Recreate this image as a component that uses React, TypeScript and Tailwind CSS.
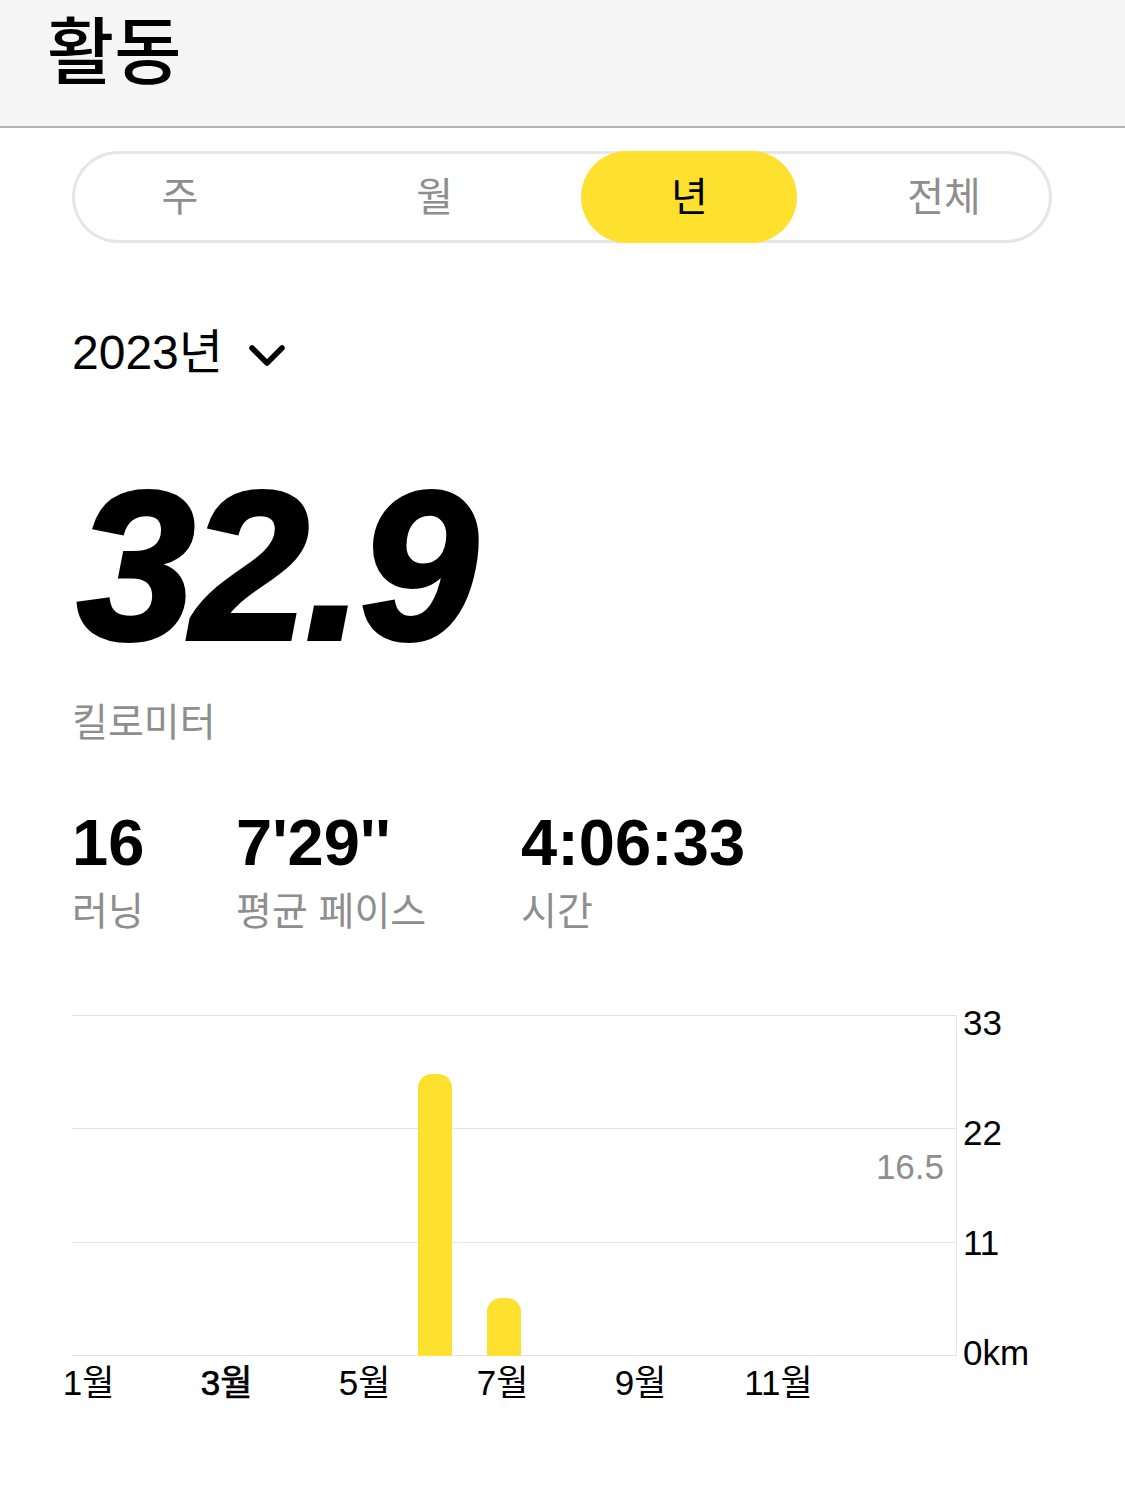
import React from 'react';

const tabs = ['주', '월', '년', '전체'];

const months = [
  { m: 1, km: 0 },
  { m: 2, km: 0 },
  { m: 3, km: 0 },
  { m: 4, km: 0 },
  { m: 5, km: 0 },
  { m: 6, km: 27.3 },
  { m: 7, km: 5.6 },
  { m: 8, km: 0 },
  { m: 9, km: 0 },
  { m: 10, km: 0 },
  { m: 11, km: 0 },
  { m: 12, km: 0 },
];

const MAX_KM = 33;
const PLOT_H = 341;

const Chevron = () => (
  <svg viewBox="0 0 38 26" className="w-[38px] h-[26px]">
    <path d="M4 5 L19 20 L34 5" fill="none" stroke="#000" strokeWidth="5.5" strokeLinecap="round" strokeLinejoin="round" />
  </svg>
);

const Stat = ({ value, label, width }: { value: string; label: string; width: string }) => (
  <div className={`flex flex-col ${width}`}>
    <span className="text-[65px] leading-none font-bold text-black">{value}</span>
    <span className="mt-[17px] text-[39px] leading-none text-[#8e8e8e]">{label}</span>
  </div>
);

export default function App() {
  return (
    <div className="min-h-[1485px] w-[1125px] bg-white font-['Liberation_Sans','Noto_Sans_CJK_KR',sans-serif]">
      {/* Header */}
      <div className="h-[128px] bg-[#f5f5f5] border-b-2 border-[#b3b3b3] pl-[47px] pt-[9px]">
        <h1 className="text-[73px] leading-[1.2] font-medium text-black">활동</h1>
      </div>

      {/* Segmented control */}
      <div className="ml-[72px] mt-[23px] w-[980px] h-[92px] rounded-full shadow-[inset_0_0_0_3px_#e6e6e6] flex justify-between">
        {tabs.map((t) => (
          <div
            key={t}
            className={`w-[216px] h-full rounded-full flex items-center justify-center text-[40px] ${
              t === '년' ? 'bg-[#fee02f] text-black' : 'text-[#8e8e8e]'
            }`}
          >
            {t}
          </div>
        ))}
      </div>

      {/* Year picker */}
      <div className="ml-[72px] mt-[86px] flex items-center">
        <span className="text-[48px] leading-none text-black">2023년</span>
        <span className="ml-[25px] mt-[6px]">
          <Chevron />
        </span>
      </div>

      {/* Total distance */}
      <div className="ml-[77px] mt-[83px] text-[212px] leading-none font-bold italic tracking-[-4px] text-black [-webkit-text-stroke:4px_#000]">
        32.9
      </div>
      <div className="ml-[72px] mt-[31px] text-[39px] leading-none text-[#8e8e8e]">킬로미터</div>

      {/* Stats */}
      <div className="ml-[72px] mt-[68px] flex">
        <Stat value="16" label="러닝" width="w-[164px]" />
        <Stat value={"7'29''"} label="평균 페이스" width="w-[285px]" />
        <Stat value="4:06:33" label="시간" width="w-[300px]" />
      </div>

      {/* Chart */}
      <div className="mt-[84px]">
        <div className="flex items-start">
          <div className="ml-[72px] w-[885px] h-[341px] relative border-t border-r border-[#e5e5e5] flex flex-col">
            <div className="flex-1 border-b border-[#e5e5e5]" />
            <div className="flex-1 border-b border-[#e5e5e5]" />
            <div className="flex-1 border-b border-[#e5e5e5]" />
            {months
              .filter((d) => d.km > 0)
              .map((d) => (
                <div
                  key={d.m}
                  className="absolute bottom-0 w-[34px] bg-[#fee02f] rounded-t-[14px]"
                  style={{ left: 16 + (d.m - 1) * 69 - 17 + 2, height: Math.round((d.km / MAX_KM) * PLOT_H) }}
                />
              ))}
            <span className="absolute right-[12px] top-[133px] text-[35px] leading-none text-[#8e8e8e]">16.5</span>
          </div>
          <div className="ml-[6px] -mt-[10px] h-[365px] flex flex-col justify-between text-[35px] leading-none text-black">
            <span>33</span>
            <span>22</span>
            <span>11</span>
            <span>0km</span>
          </div>
        </div>
        <div className="ml-[54px] -mt-[5px] flex">
          {months.map((d) => (
            <div key={d.m} className="w-[69px] flex justify-center">
              {d.m % 2 === 1 && (
                <span className={`text-[35px] leading-none text-black whitespace-nowrap ${d.m === 3 ? '[-webkit-text-stroke:0.7px_#000]' : ''}`}>
                  {d.m}월
                </span>
              )}
            </div>
          ))}
        </div>
      </div>
    </div>
  );
}
